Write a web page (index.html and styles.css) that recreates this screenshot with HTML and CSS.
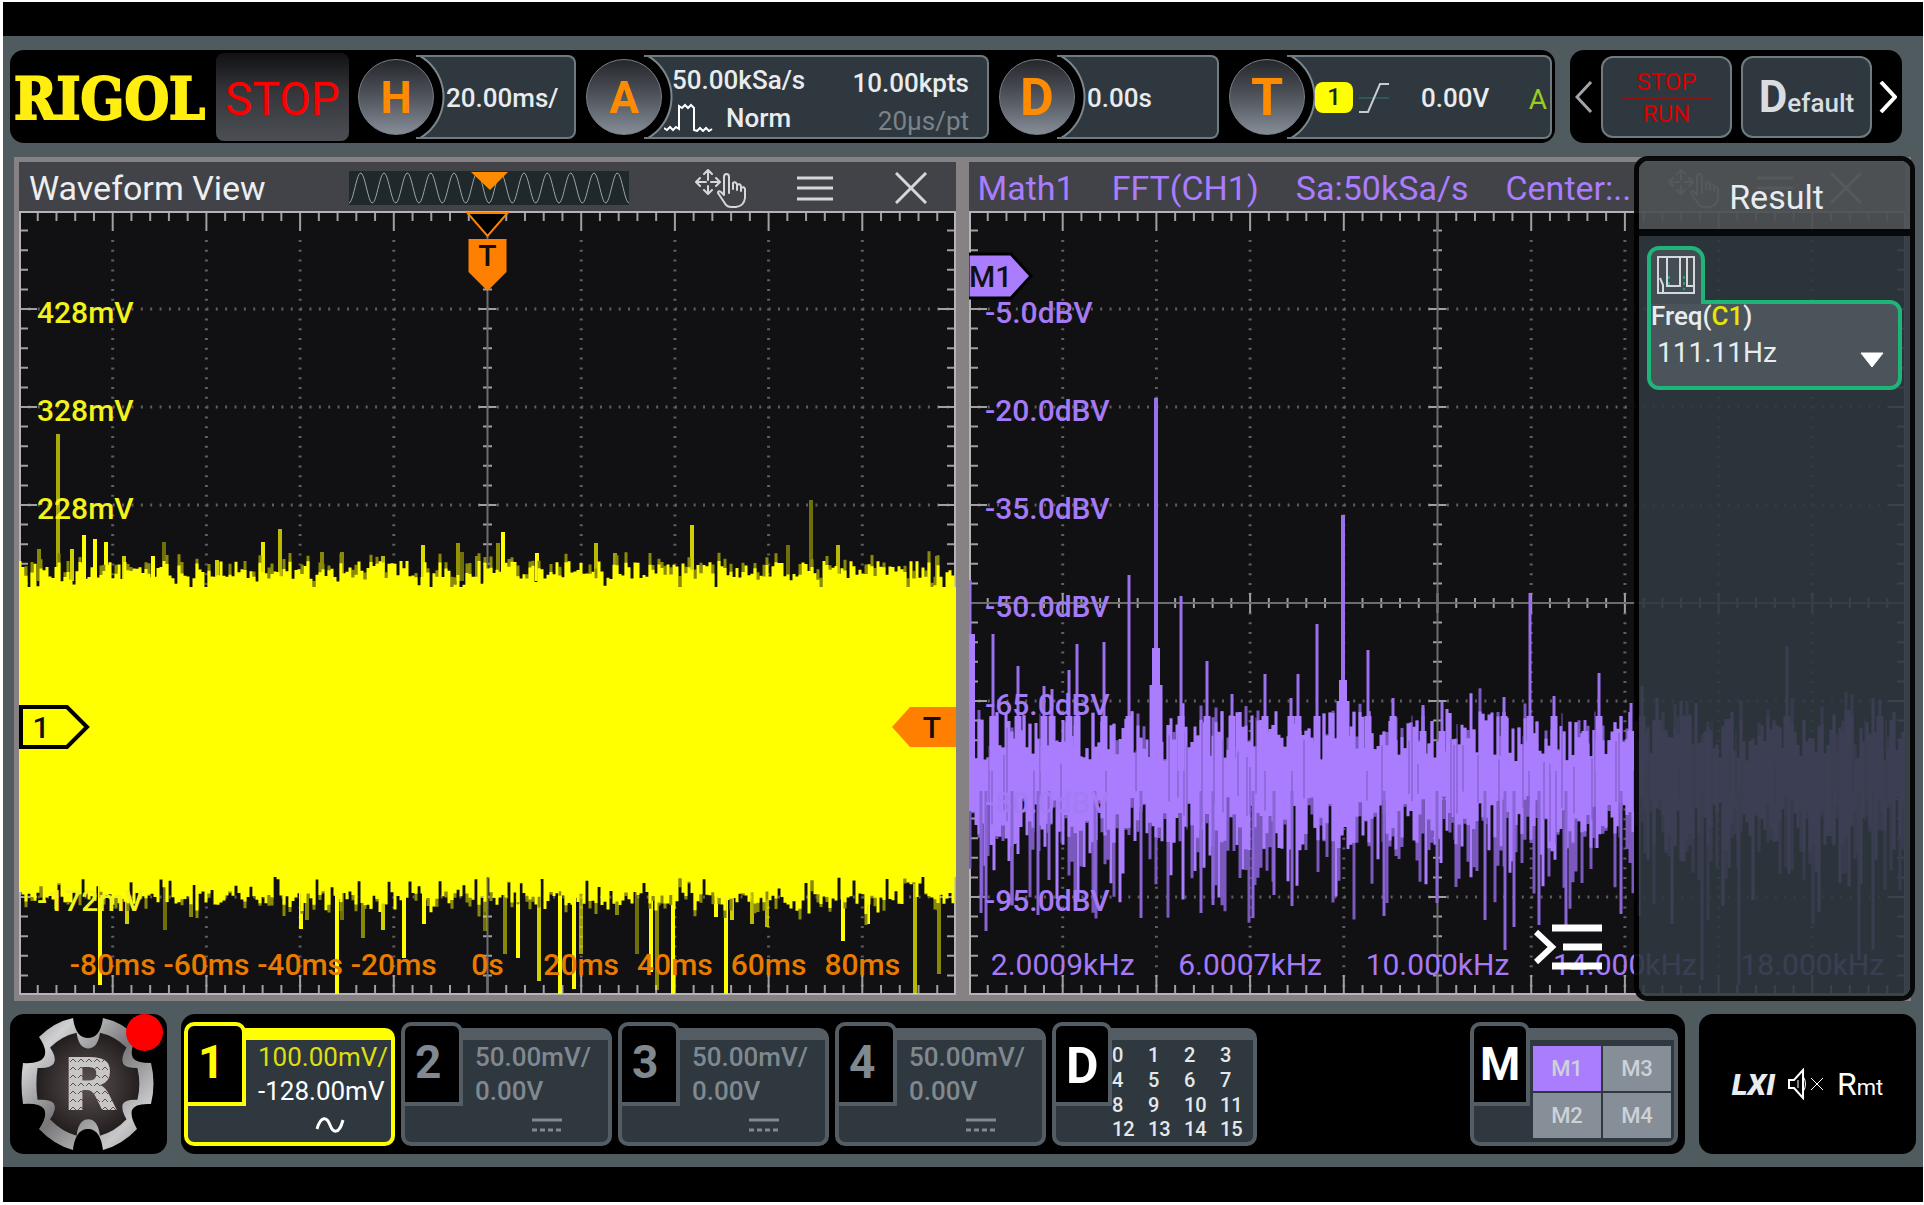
FILE: index.html
```html
<!DOCTYPE html>
<html lang="en">
<head>
    <meta charset="UTF-8">
    <meta name="viewport" content="width=device-width, initial-scale=1.0">
    <title>Rigol Oscilloscope</title>
    <link rel="stylesheet" href="styles.css">
</head>
<body>
    <svg width="0" height="0" class="defs" aria-hidden="true">
        <symbol id="icon-drag" viewBox="0 0 52 40">
            <g fill="none" stroke="currentColor" stroke-width="2" stroke-linejoin="round" stroke-linecap="round">
                <path d="M13 3v9M13 18v8M2 14h9M16 14h8M9 6l4-4 4 4M9 22l4 4 4-4M5 10l-4 4 4 4M21 10l4 4-4 4"/>
                <path d="M34 25V9q0-3-2.500-3T29 9v18l-3-3q-3-2-3 1l8 12q2 2 5 2h5q8-1 9-9v-9q-1-3-4-1v3v-5q-1-3-4-1v5v-6q-2-3-4-1v6"/>
            </g>
        </symbol>
        <symbol id="icon-menu" viewBox="0 0 36 30">
            <path d="M0 5h36M0 15h36M0 26h36" fill="none" stroke="currentColor" stroke-width="3"/>
        </symbol>
        <symbol id="icon-close" viewBox="0 0 32 32">
            <path d="M1 1l30 30M31 1L1 31" fill="none" stroke="currentColor" stroke-width="3"/>
        </symbol>
        <symbol id="icon-dc" viewBox="0 0 30 16">
            <path d="M0 3h30" stroke="currentColor" stroke-width="3"/>
            <path d="M0 13h30" stroke="currentColor" stroke-width="3" stroke-dasharray="5 3"/>
        </symbol>
    </svg>

    <div class="screen">
        <!-- Top toolbar -->
        <header class="toolbar">
            <div class="settings">
                <span class="logo">RIGOL</span>
                <button class="run-state">STOP</button>
                <div class="setting horizontal">
                    <button class="knob">H</button>
                    <div class="box">20.00ms/</div>
                </div>
                <div class="setting acquire">
                    <button class="knob">A</button>
                    <div class="box">
                        <div class="rate">
                            <span>50.00kSa/s</span>
                            <span class="mode"><svg width="52" height="30" viewBox="0 0 52 30"><path d="M0 26l3 2 3-3 3 3 3-3 3 2V4l3 2 3-3 3 3 3-3 3 3v22l3 1 3-3 3 3 3-3 3 3 3-2" fill="none" stroke="#fff" stroke-width="2"/></svg>Norm</span>
                        </div>
                        <div class="depth">
                            <span>10.00kpts</span>
                            <span class="dim">20µs/pt</span>
                        </div>
                    </div>
                </div>
                <div class="setting delay">
                    <button class="knob big">D</button>
                    <div class="box">0.00s</div>
                </div>
                <div class="setting trigger">
                    <button class="knob big">T</button>
                    <div class="box">
                        <span class="source">1</span>
                        <svg width="30" height="30" viewBox="0 0 30 30"><path d="M0 15h30" stroke="#2c5a5c" stroke-width="2"/><path d="M0 29h9L21 1h9" fill="none" stroke="#c8ccce" stroke-width="2"/></svg>
                        <span class="level">0.00V</span>
                        <span class="sweep">A</span>
                    </div>
                </div>
            </div>
            <div class="shortcuts">
                <button class="arrow prev" aria-label="Previous"><svg width="18" height="32" viewBox="0 0 18 32"><path d="M16 1L2 16l14 15" fill="none" stroke="currentColor" stroke-width="3"/></svg></button>
                <button class="shortcut stop-run"><span>STOP</span><span>RUN</span></button>
                <button class="shortcut default"><span class="cap">D</span>efault</button>
                <button class="arrow next" aria-label="Next"><svg width="18" height="32" viewBox="0 0 18 32"><path d="M2 1l14 15L2 31" fill="none" stroke="currentColor" stroke-width="4"/></svg></button>
            </div>
        </header>

        <!-- Waveform and FFT windows -->
        <main class="views">
            <section class="view">
                <div class="view-header">
                    <h2>Waveform View</h2>
                    <svg class="overview" viewBox="0 0 280 34"><path id="overview-wave" fill="none" stroke="#9aa3a5" stroke-width="1"/><path d="M122 1h37l-18 18z" fill="#ff8c00"/></svg>
                    <button class="tool" aria-label="Drag"><svg width="52" height="40"><use href="#icon-drag"/></svg></button>
                    <button class="tool" aria-label="Menu"><svg width="36" height="30"><use href="#icon-menu"/></svg></button>
                    <button class="tool" aria-label="Close"><svg width="32" height="32"><use href="#icon-close"/></svg></button>
                </div>
                <div class="plot"><svg id="time-plot"></svg></div>
            </section>
            <section class="view">
                <div class="view-header math">
                    <span>Math1</span><span>FFT(CH1)</span><span>Sa:50kSa/s</span><span>Center:..</span>
                    <button class="tool" aria-label="Drag"><svg width="52" height="40"><use href="#icon-drag"/></svg></button>
                    <button class="tool" aria-label="Menu"><svg width="36" height="30"><use href="#icon-menu"/></svg></button>
                    <button class="tool" aria-label="Close"><svg width="32" height="32"><use href="#icon-close"/></svg></button>
                </div>
                <div class="plot"><svg id="fft-plot"></svg></div>
            </section>

            <button class="collapse" aria-label="Collapse results">
                <svg width="68" height="46" viewBox="0 0 68 46"><path d="M18 4h50M29 23h39M18 42h50" stroke="#fff" stroke-width="7"/><path d="M2 8l16 15L2 38" fill="none" stroke="#fff" stroke-width="6"/></svg>
            </button>

            <aside class="result">
                <h2>Result</h2>
                <div class="result-body">
                    <div class="measure-tab">
                        <svg width="38" height="38" viewBox="0 0 38 38" fill="none" stroke="#d5d9db" stroke-width="2"><path d="M1 1h36v36H1zM10 2v28h13V2M30 2v28h7M3 22l3 7v8"/><path d="M12 20v12M27 20v14" stroke="#2a9a76" stroke-dasharray="3 3"/></svg>
                    </div>
                    <div class="measure">
                        <div class="name">Freq(<span>C1</span>)</div>
                        <div class="value">111.11Hz <svg width="24" height="16" viewBox="0 0 24 16"><path d="M1 1h22L12 15z" fill="#fff" stroke="#fff" stroke-linejoin="round"/></svg></div>
                    </div>
                </div>
            </aside>
        </main>

        <!-- Channels -->
        <footer class="dock">
            <button class="home" aria-label="Home">
                <svg width="134" height="134" viewBox="0 0 134 134">
                    <defs>
                        <linearGradient id="silver" x1="0" y1="0" x2="1" y2="1">
                            <stop offset="0" stop-color="#8c8c8e"/><stop offset=".2" stop-color="#d0d0d2"/><stop offset=".5" stop-color="#77777a"/><stop offset=".8" stop-color="#c8c8ca"/><stop offset="1" stop-color="#8f8f92"/>
                        </linearGradient>
                        <radialGradient id="hub"><stop offset="0" stop-color="#5c5252"/><stop offset="1" stop-color="#241f1f"/></radialGradient>
                        <pattern id="mesh" width="8" height="8" patternUnits="userSpaceOnUse"><rect width="8" height="8" fill="#c9c6c6"/><path d="M1 5l3-3 3 3" stroke="#5a5252" fill="none" stroke-width="1"/></pattern>
                        <path id="gear" d="M52 1C54 16 60 21 67 21S80 16 82 1Q101 5 116 20Q108 34 112 41Q115 46 130 46Q135 66 130 87Q114 86 111 93Q109 100 116 112Q101 128 82 133C80 117 74 112 67 112S54 117 52 133Q33 128 18 112Q27 99 23 92Q19 86 2 87Q-1 66 2 46Q19 47 23 40Q27 33 18 20Q33 5 52 1Z"/>
                    </defs>
                    <use href="#gear" fill="url(#silver)"/>
                    <use href="#gear" fill="url(#hub)" transform="translate(15 15) scale(.78)"/>
                    <text x="69" y="93" text-anchor="middle" class="home-letter">R</text>
                </svg>
                <span class="record-dot"></span>
            </button>

            <div class="channels">
                <button class="channel active">
                    <span class="tab">1</span>
                    <span class="body"><span class="scale">100.00mV/</span><span class="offset">-128.00mV</span><svg class="coupling" width="30" height="16" viewBox="0 0 30 16"><path d="M2 12C6-2 12 0 15 8S24 18 28 3" fill="none" stroke="#fff" stroke-width="3"/></svg></span>
                </button>
                <button class="channel">
                    <span class="tab">2</span>
                    <span class="body"><span>50.00mV/</span><span>0.00V</span><svg class="coupling" width="30" height="16"><use href="#icon-dc"/></svg></span>
                </button>
                <button class="channel">
                    <span class="tab">3</span>
                    <span class="body"><span>50.00mV/</span><span>0.00V</span><svg class="coupling" width="30" height="16"><use href="#icon-dc"/></svg></span>
                </button>
                <button class="channel">
                    <span class="tab">4</span>
                    <span class="body"><span>50.00mV/</span><span>0.00V</span><svg class="coupling" width="30" height="16"><use href="#icon-dc"/></svg></span>
                </button>
                <button class="channel digital">
                    <span class="tab">D</span>
                    <span class="body bits"><span>0</span><span>1</span><span>2</span><span>3</span><span>4</span><span>5</span><span>6</span><span>7</span><span>8</span><span>9</span><span>10</span><span>11</span><span>12</span><span>13</span><span>14</span><span>15</span></span>
                </button>
                <button class="channel maths">
                    <span class="tab">M</span>
                    <span class="body cells"><span class="on">M1</span><span>M3</span><span>M2</span><span>M4</span></span>
                </button>
            </div>

            <div class="status">
                <span class="lxi">LXI</span>
                <svg width="38" height="32" viewBox="0 0 38 32" fill="none" stroke="#fff" stroke-width="2"><path d="M2 12h5L16 2v28L7 20H2z"/><path d="M11 12v8M16 8q5 8 0 16M24 10l12 12M36 10L24 22" stroke-width="1"/></svg>
                <span class="remote">R<small>mt</small></span>
            </div>
        </footer>
    </div>

    <script src="script.js"></script>
</body>
</html>
```

FILE: styles.css
```css
* { box-sizing: border-box; }
body { margin: 0; background: #fff; font-family: Roboto, "Liberation Sans", sans-serif; font-size: 26px; color: #e8ecee; }
button { font-family: inherit; font-size: inherit; color: inherit; background: none; border: none; padding: 0; margin: 0; cursor: pointer; }
h2 { margin: 0; font-size: 34px; font-weight: 400; line-height: 40px; }
svg { display: block; flex: none; }
.defs { position: absolute; }

.screen { display: flex; flex-direction: column; height: calc(100vh - 5px); min-height: 800px; margin: 2px 1px 3px 3px; background: #505b5f; border-top: 34px solid #000; border-bottom: 35px solid #000; padding: 14px 0 13px; }

/* toolbar */
.toolbar { display: flex; gap: 15px; height: 93px; padding: 0 21px 0 7px; flex: none; }
.settings { flex: 1; display: flex; align-items: center; background: #000; border-radius: 14px; padding: 0 3px 0 4px; }
.logo { width: 202px; font-family: "DejaVu Serif Condensed", "DejaVu Serif", serif; font-weight: 700; font-size: 57px; line-height: 60px; padding-top: 4px; color: #ffee10; -webkit-text-stroke: 2px #ffee10; }
.run-state { width: 133px; height: 88px; border-radius: 8px; background: linear-gradient(#101113, #35373b 45%, #4b4e54); color: #f00; font-size: 46px; padding-top: 4px; }
.setting { position: relative; display: flex; margin-left: 9px; padding-left: 58px; height: 84px; }
.setting.acquire, .setting.trigger, .setting.delay { margin-left: 10px; }
.knob { position: absolute; left: 0; top: 4px; width: 76px; height: 76px; border-radius: 50%; border: 1px solid #777e86; background: linear-gradient(#25272c, #4c5057 45%, #858d96); color: #ff8c00; font-size: 44px; font-weight: 700; line-height: 76px; text-align: center; }
.knob.big { font-size: 52px; }
.box { display: flex; align-items: center; flex: 1; border: 2px solid #6f7b81; border-left: none; border-radius: 0 8px 8px 0; padding: 2px 0 0 30px; background: radial-gradient(circle at -20px 50%, #000 46px, #7d888d 47px, #7d888d 48px, #2f383f 49px); }
.horizontal { width: 218px; }
.acquire { width: 403px; }
.delay { width: 220px; }
.trigger { flex: 1; }
.box { font-weight: 500; }
.acquire .box { padding: 4px 18px 0 28px; justify-content: space-between; }
.rate, .depth { display: flex; flex-direction: column; gap: 6px; line-height: 32px; }
.depth { text-align: right; padding-top: 6px; }
.mode { display: flex; gap: 10px; margin-left: -8px; }
.dim { color: #7b838a; font-weight: 400; }
.source { width: 38px; height: 31px; border-radius: 8px; background: #ff0; color: #222; font-size: 24px; line-height: 31px; text-align: center; }
.trigger .box { padding-left: 28px; }
.trigger svg { margin-left: 6px; }
.level { margin-left: 32px; }
.sweep { margin: 4px 3px 0 auto; color: #9acd1e; font-size: 28px; font-weight: 400; }
.shortcuts { display: flex; align-items: center; background: #000; border-radius: 14px; width: 332px; padding: 0 5px; }
.arrow { color: #fff; }
.prev { color: #a2a5a8; margin-right: 8px; }
.next { margin-left: 7px; }
.shortcut { flex: 1; height: 82px; border: 2px solid #6f7b81; border-radius: 12px; background: #2f383f; }
.stop-run { display: flex; flex-direction: column; align-items: center; justify-content: center; margin-right: 9px; padding-top: 3px; color: #d90000; font-size: 24px; line-height: 30px; }
.stop-run span:first-child { width: 90px; border-bottom: 2px solid #8c1414; }
.default { font-weight: 500; color: #d9dde1; }
.default .cap { font-size: 44px; font-weight: 700; }

/* windows */
.views { position: relative; flex: 1; min-height: 0; display: flex; gap: 13px; margin: 14px 12px 13px 11px; padding: 5px 6px 6px 5px; background: #868284; }
.view { flex: 1; min-width: 0; display: flex; flex-direction: column; }
.view-header { display: flex; align-items: center; height: 49px; background: #424348; padding: 2px 29px 0 10px; color: #eceef0; }
.overview { width: 280px; height: 34px; margin-left: 83px; margin-right: auto; background: #1f282b; }
.tool { color: #d5d7d8; margin-left: 50px; }
.tool:last-child { margin-left: 62px; }
.math { gap: 37px; color: #aa7dff; font-size: 34px; padding: 2px 27px 0 9px; white-space: nowrap; }
.math .tool, .math .tool:last-child { margin-left: 0; }
.plot { flex: 1; min-height: 0; background: #111012; }
.plot svg { width: 100%; height: 100%; overflow: hidden; }
.plot text { font-size: 30px; font-weight: 500; }
.mv { fill: #f2f21c; }
.ms { fill: #e87c00; }
.db, .khz { fill: #a57af5; }
.plot .khz { font-weight: 400; }
.flag { fill: #111; }
.collapse { position: absolute; right: 309px; bottom: 31px; }

/* results overlay */
.result { position: absolute; right: -4px; top: -1px; bottom: 0; width: 281px; border: 5px solid rgba(0, 0, 0, .92); border-radius: 14px; overflow: hidden; display: flex; flex-direction: column; }
.result h2 { height: 68px; padding: 2px 0 0 4px; line-height: 68px; text-align: center; background: rgba(76, 81, 84, .94); }
.result-body { flex: 1; border-top: 7px solid #06090c; background: rgba(48, 57, 64, .9); padding: 10px 8px; }
.measure-tab { position: relative; z-index: 1; width: 58px; height: 58px; margin-bottom: -4px; padding: 6px; border: 4px solid #1fb57a; border-bottom: none; border-radius: 12px 14px 0 0; background: #444d54; }
.measure { height: 90px; border: 4px solid #1fb57a; border-radius: 0 12px 12px 12px; background: #4b545b; }
.name { font-weight: 500; line-height: 24px; }
.name span { color: #e6e600; }
.value { display: flex; justify-content: space-between; align-items: center; line-height: 50px; padding: 0 14px 0 6px; font-size: 28px; }
.value svg { margin-top: 14px; }

/* dock */
.dock { display: flex; gap: 14px; height: 140px; padding: 0 7px; flex: none; }
.home { position: relative; width: 157px; background: #000; border-radius: 14px; padding-left: 11px; }
.home-letter { font-family: "DejaVu Sans", sans-serif; font-weight: 700; font-size: 73px; fill: url(#mesh); }
.record-dot { position: absolute; right: 4px; top: 0; width: 37px; height: 37px; border-radius: 50%; background: #f00; }
.channels { flex: 1; display: flex; gap: 6px; align-items: center; background: #000; border-radius: 14px; padding: 0 7px 0 3px; }
.channel { --edge: #545d64; position: relative; width: 211px; height: 124px; color: #808990; text-align: left; }
.channel.active { --edge: #ff0; }
.tab { position: absolute; left: 0; top: 0; width: 62px; height: 84px; border: 4px solid var(--edge); border-radius: 10px 10px 0 0; background: #000; font-size: 46px; font-weight: 700; line-height: 72px; padding-left: 10px; }
.active .tab { color: #ff0; }
.body { display: flex; flex-direction: column; height: 118px; margin-top: 6px; border: 4px solid var(--edge); border-top-width: 12px; border-radius: 10px; background: #2f383f; padding-left: 70px; line-height: 34px; white-space: nowrap; font-weight: 500; }
.active .body { font-weight: 400; }
.scale { color: #dede10; }
.offset { color: #fff; }
.coupling { margin: 9px 0 0 57px; }
.digital { width: 205px; color: #fff; }
.digital .tab, .maths .tab { width: 60px; font-size: 50px; line-height: 80px; }
.bits { display: grid; grid-template-columns: repeat(4, 36px); line-height: 24px; padding: 3px 0 0 56px; font-size: 20px; color: #e4e8ea; }
.maths { width: 208px; margin-left: auto; color: #fff; }
.maths .tab { font-size: 46px; line-height: 76px; padding-left: 6px; }
.cells { display: grid; grid-template-columns: 1fr 1fr; gap: 2px; padding: 6px 3px 4px 59px; font-size: 22px; line-height: 45px; text-align: center; color: #cdd2d6; }
.cells span { background: #868e97; }
.cells .on { background: #aa7dff; }
.status { width: 217px; display: flex; align-items: center; justify-content: center; gap: 12px; background: #000; border-radius: 14px; }
.lxi { font-size: 30px; font-weight: 900; font-style: italic; }
.remote { font-size: 32px; color: #fff; }
.remote small { font-size: 22px; }
```

FILE: script.js
```js
const BASE_W = 937, BASE_H = 784;

let seed = 7;
function rand() {
    seed = (seed * 16807) % 2147483647;
    return seed / 2147483647;
}

// [x, y, opacity]
const timeUp = [[20,338,.5],[39,223,.65],[53,338,.8],[65,324,1],[76,328,1],[87,331,1],[105,345,.8],[134,345,1],[145,331,.4],[198,349,.8],[244,331,.9],[261,318,.7],[303,341,.5],[323,341,.5],[364,345,.7],[404,334,.85],[439,332,.55],[443,341,.4],[458,345,.5],[479,332,.5],[484,321,1],[518,342,1],[577,332,.7],[596,342,.6],[673,314,.8],[769,334,.4],[792,289,.4],[819,334,.7],[918,345,.5]];
const timeDown = [[81,774,1],[108,713,.8],[146,719,.4],[172,706,.5],[282,718,1],[288,709,.5],[318,783,1],[323,709,.4],[344,727,.5],[364,719,.8],[385,747,1],[405,713,1],[466,720,.4],[486,743,.5],[499,747,1],[520,770,.8],[541,783,1],[555,778,1],[562,743,.6],[598,704,.5],[618,743,.4],[632,761,1],[638,779,.5],[654,783,1],[697,706,1],[707,783,1],[713,709,.8],[733,713,.7],[748,716,.7],[824,730,1],[849,713,1],[896,783,.7],[920,763,.5]];
// [x, y]
const fftUp = [[1,369],[24,423],[49,455],[75,475],[83,478],[100,459],[108,433],[135,431],[160,364],[187,187],[212,385],[238,450],[263,483],[296,463],[322,487],[329,463],[348,413],[374,304],[399,439],[424,487],[454,494],[473,491],[535,486],[561,382],[585,485],[616,509],[630,462],[662,492],[673,475],[818,435],[911,489]];
const fftDown = [[12,702],[17,720],[43,694],[69,704],[80,669],[126,679],[172,707],[232,702],[244,694],[284,707],[305,684],[323,695],[415,705],[468,692],[516,709],[536,739],[545,716],[570,714],[597,714],[652,703],[733,769],[770,774],[890,749],[904,739]];

function line(x1, y1, x2, y2, color, width, extra) {
    return `<path d="M${x1} ${y1}L${x2} ${y2}" stroke="${color}" stroke-width="${width}" ${extra || ''}/>`;
}

function grid(w, h, crossAxis) {
    const sx = w / 50, sy = h / 40;
    let out = '', ticks = '';
    for (let i = 1; i < 10; i++) {
        if (i !== 5) out += line(i * w / 10, 29, i * w / 10, h, '#5f5e60', 3, `stroke-dasharray="2 ${h / 80 - 2}"`);
    }
    for (let i = 1; i < 8; i++) {
        if (i !== 4 || !crossAxis) out += line(0, i * h / 8, w, i * h / 8, '#5f5e60', 3, `stroke-dasharray="2 ${w / 100 - 2}"`);
    }
    for (let i = 0; i <= 50; i++) {
        const x = i * sx, len = i % 5 ? 10 : 20;
        ticks += `M${x} 0v${len}M${x} ${h}v${-len}`;
        if (crossAxis) ticks += `M${x} ${h / 2 - len / 2}v${len}`;
    }
    for (let i = 0; i <= 40; i++) {
        const y = i * sy, len = i % 5 ? 9 : 18;
        ticks += `M0 ${y}h${len}M${w} ${y}h${-len}M${w / 2 - len / 2} ${y}h${len}`;
    }
    out += `<path d="${ticks}" stroke="#a09fa1" stroke-width="2"/>`;
    out += line(w / 2, 0, w / 2, h, '#6c6b6d', 2);
    if (crossAxis) out += line(0, h / 2, w, h / 2, '#6c6b6d', 2);
    out += `<rect x="1" y="1" width="${w - 2}" height="${h - 2}" fill="none" stroke="#b5b3b5" stroke-width="2"/>`;
    return out;
}

function drawTime() {
    const svg = document.getElementById('time-plot');
    const w = svg.clientWidth, h = svg.clientHeight;
    const kx = w / BASE_W, ky = h / BASE_H;
    let out = grid(w, h, false), bright = '', dull = '';
    for (let x = 1; x < BASE_W; x += 3) {
        let top = 350 + rand() * 18, bottom = 694 - rand() * 14;
        if (rand() < .15) top += 12;
        if (rand() < .16) bottom -= 16;
        if (rand() < .15) bottom += 10;
        bright += `M${x * kx} ${top * ky}V${bottom * ky}`;
        if (rand() < .35) dull += `M${x * kx} ${(top - 4 - rand() * 8) * ky}V${(bottom + rand() * 12) * ky}`;
    }
    timeUp.forEach(([x, y, o]) => out += line(x * kx, y * ky, x * kx, 370 * ky, '#ff0', 4, `opacity="${o}"`));
    timeDown.forEach(([x, y, o]) => out += line(x * kx, 670 * ky, x * kx, y * ky, '#ff0', 4, `opacity="${o}"`));
    out += `<path d="${dull}" stroke="#8a8a08" stroke-width="3"/><path d="${bright}" stroke="#ff0" stroke-width="3"/>`;
    out += `<rect x="0" y="${376 * ky}" width="${w}" height="${290 * ky}" fill="#ff0"/>`;

    ['428mV', '328mV', '228mV'].forEach((t, i) => out += `<text class="mv" x="18" y="${(i + 1) * h / 8 + 14}">${t}</text>`);
    out += `<text class="mv" x="18" y="${7 * h / 8 + 14}">-172mV</text>`;
    ['-80ms', '-60ms', '-40ms', '-20ms', '0s', '20ms', '40ms', '60ms', '80ms'].forEach((t, i) =>
        out += `<text class="ms" text-anchor="middle" x="${(i + 1) * w / 10}" y="${h - 20}">${t}</text>`);

    // trigger position, channel and trigger level flags
    const c = w / 2, y = 516 * ky;
    out += `<path d="M${c - 20} 2h40l-20 23z" fill="#000" stroke="#ff8000" stroke-width="2"/>`;
    out += `<path d="M${c - 19} 28h38v33l-19 19l-19 -19z" fill="#ff8000"/><text class="flag" text-anchor="middle" x="${c}" y="55">T</text>`;
    out += `<path d="M2 ${y - 20}h46l20 20l-20 20h-46z" fill="#ff0" stroke="#000" stroke-width="4"/><text class="flag" text-anchor="middle" x="22" y="${y + 11}">1</text>`;
    out += `<path d="M${w} ${y - 20}h-46l-18 20l18 20h46z" fill="#ff8000"/><text class="flag" text-anchor="middle" x="${w - 24}" y="${y + 11}">T</text>`;
    svg.innerHTML = out;
}

function drawFft() {
    const svg = document.getElementById('fft-plot');
    const w = svg.clientWidth, h = svg.clientHeight;
    const kx = w / BASE_W, ky = h / BASE_H;
    let out = grid(w, h, true), bright = '', dull = '', faint = '';
    for (let x = 1; x < BASE_W; x += 3) {
        const top = 500 + rand() * 50, bottom = 585 + rand() * 55;
        const high = top - (rand() < .3 ? rand() * 25 : 0);
        const low = bottom + Math.pow(rand(), 2) * 80;
        bright += `M${x * kx} ${top * ky}V${bottom * ky}`;
        if (rand() < .35) bright += `M${x * kx} ${high * ky}V${low * ky}`;
        else dull += `M${x * kx} ${high * ky}V${low * ky}`;
        // dark slits between the traces
        if (rand() < .2) faint += `M${(x + 1) * kx} ${(500 + rand() * 60) * ky}V${(580 + rand() * 60) * ky}`;
    }
    out += `<path d="${dull}" stroke="#7a58bd" stroke-width="3"/><path d="${bright}" stroke="#aa7dff" stroke-width="3"/>`;
    out += `<path d="${faint}" stroke="#7a58bd" stroke-width="1"/>`;
    fftUp.forEach(([x, y]) => {
        out += line(x * kx, y * ky, x * kx, 560 * ky, '#9a70ec', y < 310 ? 4 : 3);
        out += line(x * kx, (y < 490 ? 505 : 520) * ky, x * kx, 560 * ky, '#aa7dff', 7);
    });
    fftDown.forEach(([x, y]) => out += line(x * kx, 580 * ky, x * kx, y * ky, '#8a65d6', 3));
    // skirts of the main peaks
    [[187, 437, 474], [374, 469, 490]].forEach(([x, a, b]) => {
        out += line(x * kx, a * ky, x * kx, 560 * ky, '#aa7dff', 8);
        out += line(x * kx, b * ky, x * kx, 560 * ky, '#aa7dff', 13);
    });
    out += line(3, 423 * ky, 3, 600 * ky, '#aa7dff', 6);

    ['-5.0dBV', '-20.0dBV', '-35.0dBV', '-50.0dBV', '-65.0dBV', '-80.0dBV', '-95.0dBV'].forEach((t, i) =>
        out += `<text class="db" x="16" y="${(i + 1) * h / 8 + 14}">${t}</text>`);
    ['2.0009kHz', '6.0007kHz', '10.000kHz', '14.000kHz', '18.000kHz'].forEach((t, i) =>
        out += `<text class="khz" text-anchor="middle" x="${(i * 2 + 1) * w / 10}" y="${h - 20}">${t}</text>`);
    out += `<path d="M-1 43h43l20 22l-20 22h-43z" fill="#aa7dff" stroke="#000" stroke-width="3"/><text class="flag" x="0" y="76">M1</text>`;
    svg.innerHTML = out;
}

function drawOverview() {
    let d = 'M0 32';
    for (let x = 0; x <= 280; x += 1) d += `L${x} ${17 + 15 * Math.cos(x / 280 * Math.PI * 24)}`;
    document.getElementById('overview-wave').setAttribute('d', d);
}

function draw() {
    seed = 7;
    drawTime();
    drawFft();
}

drawOverview();
draw();
window.addEventListener('resize', draw);
```
